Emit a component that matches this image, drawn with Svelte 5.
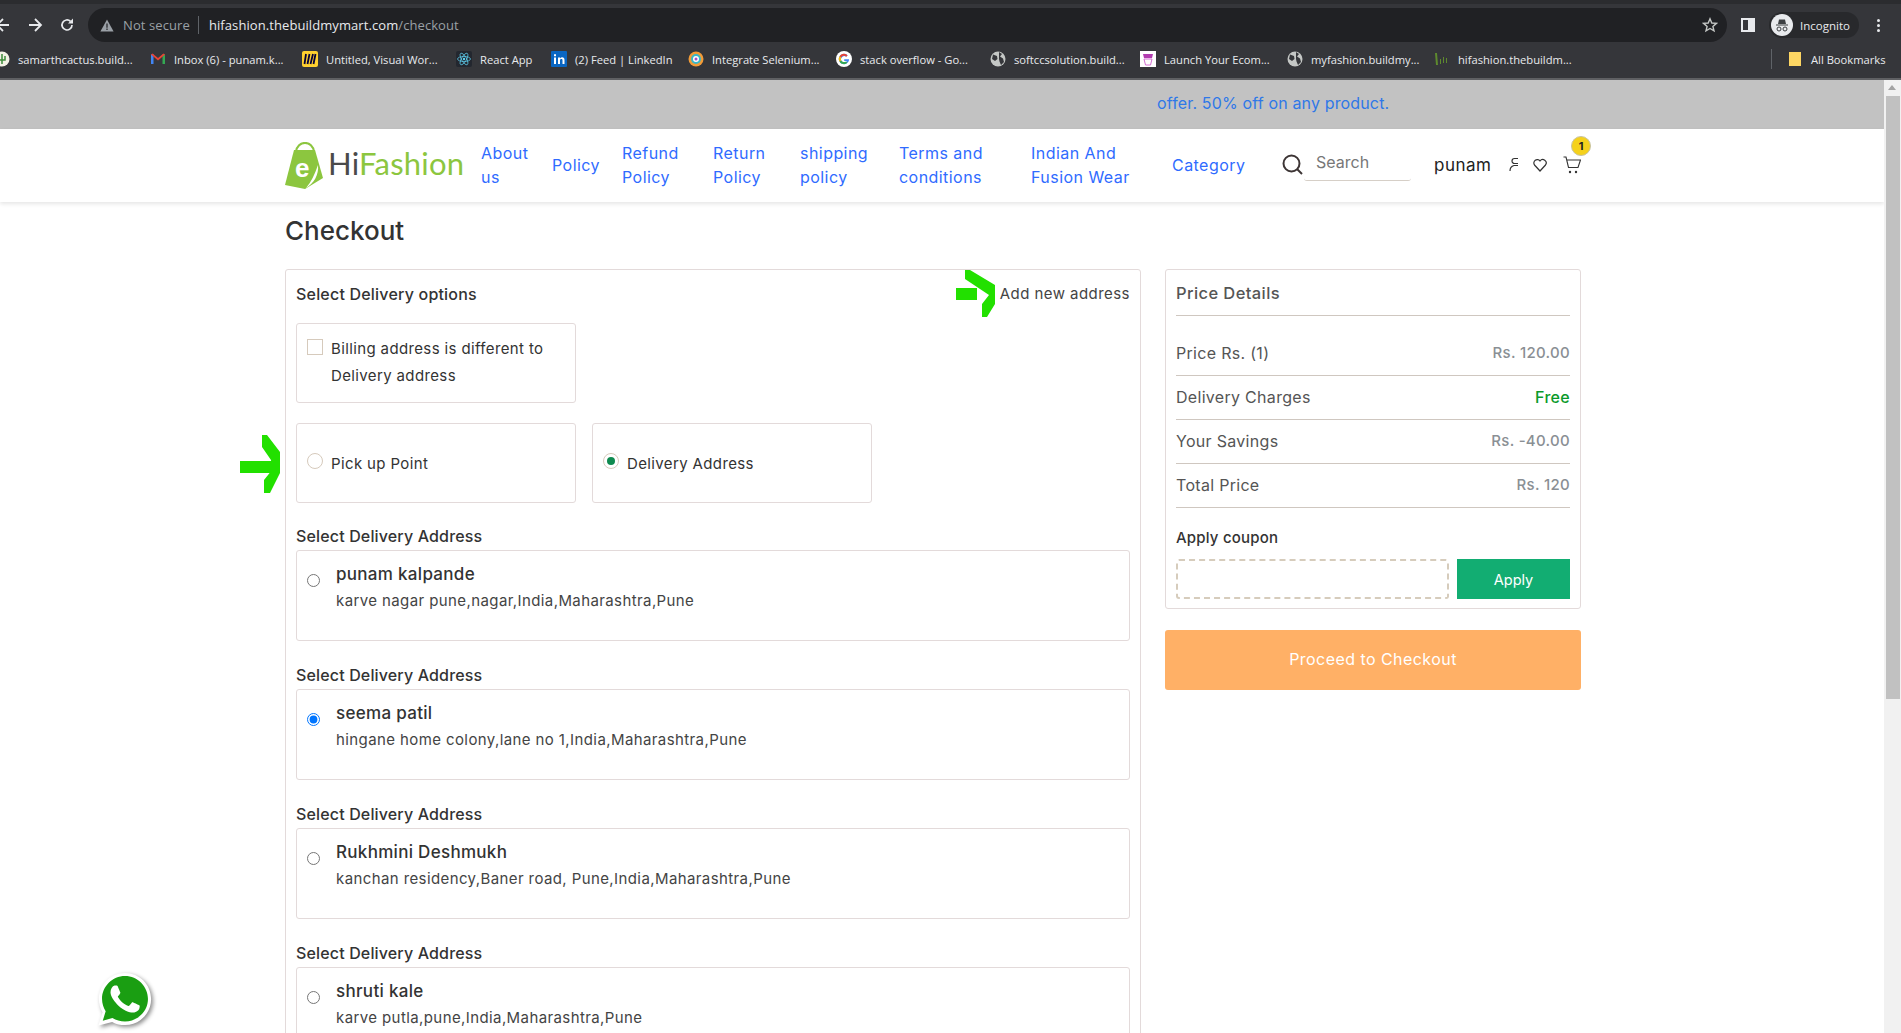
<script lang="ts">
    const bookmarks = [
        { icon: "cactus", label: "samarthcactus.build..." },
        { icon: "gmail", label: "Inbox (6) - punam.k..." },
        { icon: "miro", label: "Untitled, Visual Wor..." },
        { icon: "react", label: "React App" },
        { icon: "linkedin", label: "(2) Feed | LinkedIn" },
        { icon: "selenium", label: "Integrate Selenium..." },
        { icon: "google", label: "stack overflow - Go..." },
        { icon: "globe", label: "softccsolution.build..." },
        { icon: "launch", label: "Launch Your Ecom..." },
        { icon: "globe", label: "myfashion.buildmy..." },
        { icon: "hifashion", label: "hifashion.thebuildm..." },
    ];

    const navLinks = [
        "About us",
        "Policy",
        "Refund Policy",
        "Return Policy",
        "shipping policy",
        "Terms and conditions",
        "Indian And Fusion Wear",
        "Category",
    ];

    const addresses = [
        { name: "punam kalpande", line: "karve nagar pune,nagar,India,Maharashtra,Pune", checked: false },
        { name: "seema patil", line: "hingane home colony,lane no 1,India,Maharashtra,Pune", checked: true },
        { name: "Rukhmini Deshmukh", line: "kanchan residency,Baner road, Pune,India,Maharashtra,Pune", checked: false },
        { name: "shruti kale", line: "karve putla,pune,India,Maharashtra,Pune", checked: false },
    ];

    const prices = [
        { label: "Price Rs. (1)", value: "Rs. 120.00", free: false },
        { label: "Delivery Charges", value: "Free", free: true },
        { label: "Your Savings", value: "Rs. -40.00", free: false },
        { label: "Total Price", value: "Rs. 120", free: false },
    ];
</script>

<div class="window">
    <!-- Browser chrome -->
    <div class="toolbar">
        <div class="nav-buttons">
            <svg class="back" width="16" height="16" viewBox="0 0 16 16"><path d="M14 8H2M8 2 2 8l6 6" fill="none" stroke="#e8eaed" stroke-width="1.8" /></svg>
            <svg width="16" height="16" viewBox="0 0 16 16"><path d="M2 8h12M8 2l6 6-6 6" fill="none" stroke="#e8eaed" stroke-width="1.8" /></svg>
            <svg width="16" height="16" viewBox="0 0 16 16"><path d="M13 8a5 5 0 1 1-1.5-3.6" fill="none" stroke="#e8eaed" stroke-width="1.7" /><path d="M14 1.6V6.6H9z" fill="#e8eaed" /></svg>
        </div>
        <div class="omnibox">
            <svg width="14" height="13" viewBox="0 0 14 13"><path d="M7 0.5 13.6 12.5H0.4z" fill="#9aa0a6" /><path d="M6.4 4.5h1.2v4.2H6.4zM6.4 9.6h1.2v1.3H6.4z" fill="#202124" /></svg>
            <span class="not-secure">Not secure</span>
            <span class="omni-sep"></span>
            <span class="url">hifashion.thebuildmymart.com<span class="url-path">/checkout</span></span>
            <svg class="star" width="16" height="16" viewBox="0 0 16 16"><path d="M8 1.8 9.8 6l4.6.4-3.5 3 1.1 4.5L8 11.5l-4 2.4 1.1-4.5-3.5-3L6.2 6z" fill="none" stroke="#c4c7c5" stroke-width="1.4" /></svg>
        </div>
        <svg class="panel" width="14" height="14" viewBox="0 0 14 14"><rect x="1" y="1" width="12" height="12" fill="none" stroke="#e8eaed" stroke-width="2" /><rect x="7" y="1" width="6" height="12" fill="#e8eaed" /></svg>
        <div class="incognito">
            <svg width="22" height="22" viewBox="0 0 22 22"><circle cx="11" cy="11" r="11" fill="#e8eaed" /><path d="M5 10.5h12v1H5zM7 10l1-4.500h6l1 4.500z" fill="#3c4043" /><circle cx="8" cy="15" r="2" fill="none" stroke="#3c4043" /><circle cx="14" cy="15" r="2" fill="none" stroke="#3c4043" /></svg>
            <span>Incognito</span>
        </div>
        <div class="menu-dots"><i></i><i></i><i></i></div>
    </div>

    <div class="bookmarks">
        <div class="bookmark-list">
            {#each bookmarks as b}
                <div class="bookmark">
                    <svg width="16" height="16" viewBox="0 0 16 16">
                        {#if b.icon === "cactus"}
                            <circle cx="8" cy="8" r="7.500" fill="#f4f1e6" /><path d="M8 3v10M5 6v3h6V5" fill="none" stroke="#3d8a3a" stroke-width="1.500" />
                        {:else if b.icon === "gmail"}
                            <path d="M1 3.500 3.500 3v10H1z" fill="#4285f4" /><path d="M15 3.500 12.500 3v10H15z" fill="#34a853" /><path d="M1 3.500 2.500 2.500 8 7l5.500-4.500L15 3.500 8 9.500z" fill="#ea4335" />
                        {:else if b.icon === "miro"}
                            <rect width="16" height="16" rx="2" fill="#ffd02f" /><path d="M4 3 2.500 13M7.500 3 5.500 13M11 3 8.500 13M13.500 3 11.500 13" stroke="#050038" stroke-width="1.800" />
                        {:else if b.icon === "react"}
                            <rect width="16" height="16" rx="2" fill="#23272f" /><g fill="none" stroke="#5fd3f3" stroke-width=".7"><ellipse cx="8" cy="8" rx="6.500" ry="2.500" /><ellipse cx="8" cy="8" rx="6.500" ry="2.500" transform="rotate(60 8 8)" /><ellipse cx="8" cy="8" rx="6.500" ry="2.500" transform="rotate(120 8 8)" /></g><circle cx="8" cy="8" r="1.200" fill="#5fd3f3" />
                        {:else if b.icon === "linkedin"}
                            <rect width="16" height="16" rx="1" fill="#0a66c2" /><path d="M3 6.500h2V13H3zM3 3.200h2v2H3zM7 6.500h2v1c.5-.8 1.300-1.200 2.200-1.200 1.500 0 2.300 1 2.300 2.700v4h-2V9.500c0-.9-.4-1.400-1.100-1.400S9 8.600 9 9.500V13H7z" fill="#fff" />
                        {:else if b.icon === "selenium"}
                            <circle cx="8" cy="8" r="7.500" fill="#f29b38" /><circle cx="8" cy="8" r="5" fill="#38b6c9" /><circle cx="8" cy="8" r="3" fill="#fff" /><circle cx="8" cy="8" r="1.500" fill="#a64dc4" />
                        {:else if b.icon === "google"}
                            <circle cx="8" cy="8" r="8" fill="#fff" /><path d="M13 8.200H8.200v1.900H11A3.200 3.200 0 1 1 10.200 5.700l1.400-1.400A5.200 5.200 0 1 0 13.100 9z" fill="#4285f4" /><path d="M3.500 5.300 5.200 6.500a3.200 3.200 0 0 1 5-.8l1.400-1.400a5.200 5.200 0 0 0-8.100 1z" fill="#ea4335" /><path d="M3.500 10.700 5.200 9.500a3 3 0 0 1 0-3L3.500 5.300a5.200 5.200 0 0 0 0 5.400z" fill="#fbbc05" /><path d="M3.500 10.700a5.200 5.200 0 0 0 8 1L10 10.400a3.200 3.200 0 0 1-4.800-.9z" fill="#34a853" />
                        {:else if b.icon === "globe"}
                            <circle cx="8" cy="8" r="7.500" fill="#c4c7c5" /><path d="M3 3.500 7 5l.5 3L5 10 2 8zM9 1l3 2-2 2.500 3 2L14 11l-3 3-1.500-3.500L9 8z" fill="#35363a" />
                        {:else if b.icon === "launch"}
                            <rect width="16" height="16" fill="#fff" /><path d="M3 3h10l-1 4H4z" fill="#b23cb0" /><path d="M4 8h8l-1.500 6h-5z" fill="none" stroke="#d46ed2" />
                        {:else if b.icon === "hifashion"}
                            <path d="M1 2h2l1 12H2zM6 8h1v5H6zM9 6h1v6H9zM12 7h1v5h-1z" fill="#5e8a2e" />
                        {/if}
                    </svg>
                    <span>{b.label}</span>
                </div>
            {/each}
        </div>
        <span class="bookmark-sep"></span>
        <div class="all-bookmarks">
            <svg width="12" height="16" viewBox="0 0 12 16"><path d="M0 1h8l4 0v14H0z" fill="#fdd663" /></svg>
            <span>All Bookmarks</span>
        </div>
    </div>

    <!-- Page -->
    <div class="viewport">
        <div class="page">
            <div class="offer"><span>offer. 50% off on any product.</span></div>

            <header class="site-header">
                <div class="logo">
                    <svg width="38" height="47" viewBox="0 0 38 47">
                        <path d="M11 10C12 -2 28 -2 29 10" fill="none" stroke="#8cc63f" stroke-width="2.200" />
                        <path d="M9 8h21l8 28-18 11L0 43z" fill="#8cc63f" />
                        <path d="M33 23c1 10-4 18-12 23 5-6 9-14 12-23z" fill="#fff" />
                        <text x="10" y="35" class="logo-e">e</text>
                    </svg>
                    <span class="logo-word"><span class="logo-hi">Hi</span>Fashion</span>
                </div>
                <nav class="nav">
                    {#each navLinks as link}
                        <a href="#top">{link}</a>
                    {/each}
                </nav>
                <div class="search">
                    <svg width="21" height="21" viewBox="0 0 21 21"><circle cx="9.500" cy="9.500" r="8" fill="none" stroke="#3d3535" stroke-width="2" /><path d="m15 15 5 5" stroke="#3d3535" stroke-width="2" /></svg>
                    <span class="search-field">Search</span>
                </div>
                <span class="username">punam</span>
                <div class="user-icons">
                    <svg class="user" width="9" height="15" viewBox="0 0 9 15"><path d="M9 1.500H5.500a2.500 2.500 0 0 0 0 5H9M1 14c0-3 2-5 4-5.500h4" fill="none" stroke="#333" stroke-width="1.200" /></svg>
                    <svg class="heart" width="14" height="14" viewBox="0 0 14 14"><path d="M7 13 1.500 7A3.400 3.400 0 0 1 7 3a3.400 3.400 0 0 1 5.500 4z" fill="none" stroke="#333" stroke-width="1.200" /></svg>
                    <div class="cart">
                        <svg width="18" height="18" viewBox="0 0 18 18"><path d="M0.500 1H3l2.500 10.500h9.500L17.500 4H4" fill="none" stroke="#333" stroke-width="1.100" /><circle cx="7" cy="16" r="1.200" fill="#333" /><circle cx="13" cy="16" r="1.200" fill="#333" /></svg>
                        <span class="badge">1</span>
                    </div>
                </div>
            </header>

            <main class="container">
                <h1>Checkout</h1>
                <div class="columns">
                    <section class="card delivery">
                        <div class="delivery-head">
                            <h2>Select Delivery options</h2>
                            <a href="#top" class="add-address">Add new address</a>
                        </div>

                        <div class="option-row first">
                            <div class="option billing">
                                <span class="checkbox"></span>
                                <span>Billing address is different to Delivery address</span>
                            </div>
                        </div>

                        <div class="option-row">
                            <div class="option">
                                <span class="radio"></span>
                                <span>Pick up Point</span>
                            </div>
                            <div class="option">
                                <span class="radio on"></span>
                                <span>Delivery Address</span>
                            </div>
                        </div>

                        {#each addresses as a}
                            <h3 class="address-title">Select Delivery Address</h3>
                            <label class="address">
                                <input type="radio" name="address" checked={a.checked} />
                                <span class="address-text">
                                    <span class="address-name">{a.name}</span>
                                    <span class="address-line">{a.line}</span>
                                </span>
                            </label>
                        {/each}
                    </section>

                    <aside class="summary">
                        <section class="card price">
                            <h2 class="price-title">Price Details</h2>
                            <div class="price-rows">
                                {#each prices as p}
                                    <div class="price-row">
                                        <span>{p.label}</span>
                                        <span class="price-value" class:free={p.free}>{p.value}</span>
                                    </div>
                                {/each}
                            </div>
                            <div class="coupon-title">Apply coupon</div>
                            <div class="coupon">
                                <input type="text" class="coupon-input" />
                                <button class="apply">Apply</button>
                            </div>
                        </section>
                        <button class="proceed">Proceed to Checkout</button>
                    </aside>
                </div>
            </main>
        </div>

        <div class="scrollbar">
            <div class="scroll-up"></div>
            <div class="scroll-thumb"></div>
        </div>

        <!-- Annotation arrows drawn on top of the screenshot -->
        <svg class="arrow arrow-a" width="41" height="60" viewBox="0 0 41 60">
            <path d="M22 0h5l13 17v21L30 58h-6V45l8-10-1-10-9-13z" fill="#22e000" />
            <rect x="0" y="26" width="38" height="12" fill="#22e000" />
        </svg>
        <svg class="arrow arrow-b" width="39" height="49" viewBox="0 0 39 49">
            <path d="M9 1h5l25 15v19l-8 13h-5V35l7-9-24-16z" fill="#22e000" />
            <rect x="0" y="19" width="21" height="12" fill="#22e000" />
        </svg>

        <svg class="whatsapp" width="58" height="58" viewBox="0 0 24 24">
            <path d="M12 1.200C6 1.200 1.200 6 1.200 12c0 2 .5 3.900 1.500 5.500L1 23l5.700-1.500c1.600.9 3.400 1.300 5.300 1.300 6 0 10.800-4.800 10.800-10.800S18 1.200 12 1.200z" fill="#fff" />
            <path d="M12 2.500C6.800 2.500 2.500 6.800 2.500 12c0 1.900.6 3.600 1.500 5.100L2.800 21l4-1.100c1.500.9 3.300 1.400 5.200 1.400 5.200 0 9.500-4.200 9.500-9.300S17.200 2.500 12 2.500z" fill="#1a9e12" />
            <path d="M17.472 14.382c-.297-.149-1.758-.867-2.03-.967-.273-.099-.471-.148-.67.15-.197.297-.767.966-.94 1.164-.173.199-.347.223-.644.075-.297-.15-1.255-.463-2.39-1.475-.883-.788-1.48-1.761-1.653-2.059-.173-.297-.018-.458.13-.606.134-.133.298-.347.446-.52.149-.174.198-.298.298-.497.099-.198.05-.371-.025-.52-.075-.149-.669-1.612-.916-2.207-.242-.579-.487-.5-.669-.51-.173-.008-.371-.01-.57-.01-.198 0-.52.074-.792.372-.272.297-1.04 1.016-1.04 2.479 0 1.462 1.065 2.875 1.213 3.074.149.198 2.096 3.2 5.077 4.487.709.306 1.262.489 1.694.625.712.227 1.36.195 1.871.118.571-.085 1.758-.719 2.006-1.413.248-.694.248-1.289.173-1.413-.074-.124-.272-.198-.57-.347z" fill="#fff" />
        </svg>
    </div>
</div>

<style>
    :global(body) {
        margin: 0;
        overflow: hidden;
    }

    .window {
        height: 1033px;
        display: flex;
        flex-direction: column;
        font-family: Inter, "Noto Sans", sans-serif;
        color: #333;
        overflow: hidden;
    }

    /* Browser chrome */
    .toolbar {
        height: 42px;
        padding-top: 8px;
        box-sizing: border-box;
        display: flex;
        align-items: center;
        background: #35363a;
        box-shadow: inset 0 4px 0 #2b2c2f;
    }

    .nav-buttons {
        width: 88px;
        flex: none;
        display: flex;
        align-items: center;
        gap: 16px;
    }

    .back {
        margin-left: -5px;
    }

    .omnibox {
        width: 1639px;
        height: 34px;
        flex: none;
        box-sizing: border-box;
        padding: 0 9px 0 12px;
        border-radius: 17px;
        background: #202124;
        display: flex;
        align-items: center;
        font-family: "Open Sans", sans-serif;
        font-size: 13px;
    }

    .not-secure {
        margin-left: 9px;
        color: #9aa0a6;
        letter-spacing: 0.1px;
    }

    .omni-sep {
        width: 1px;
        height: 18px;
        background: #5f6368;
        margin: 0 10px 0 8px;
    }

    .url {
        color: #e8eaed;
        letter-spacing: 0.08px;
    }

    .url-path {
        color: #9aa0a6;
    }

    .star {
        margin-left: auto;
    }

    .panel {
        margin-left: 14px;
        flex: none;
    }

    .incognito {
        margin-left: 14px;
        width: 90px;
        height: 26px;
        box-sizing: border-box;
        padding: 0 8px 0 2px;
        border-radius: 13px;
        background: #28292c;
        display: flex;
        align-items: center;
        gap: 7px;
        color: #e8eaed;
        font-family: "Open Sans", sans-serif;
        font-size: 11.500px;
        flex: none;
    }

    .menu-dots {
        margin-left: 18px;
        display: flex;
        flex-direction: column;
        gap: 2px;
    }

    .menu-dots i {
        width: 3px;
        height: 3px;
        border-radius: 50%;
        background: #e8eaed;
    }

    .bookmarks {
        height: 34px;
        padding-bottom: 2px;
        flex: none;
        background: #35363a;
        display: flex;
        align-items: center;
        color: #e8eaed;
        font-family: "Open Sans", sans-serif;
        font-size: 11.200px;
        border-bottom: 2px solid #5f6063;
        box-sizing: content-box;
    }

    .bookmark-list {
        width: 1777px;
        margin-left: -6px;
        flex: none;
        display: grid;
        grid-template-columns: 156px 152px 154px 95px 137px 148px 154px 150px 147px 147px 1fr;
        overflow: hidden;
    }

    .bookmark {
        display: flex;
        align-items: center;
        gap: 8px;
        white-space: nowrap;
    }

    .bookmark svg {
        flex: none;
    }

    .bookmark-sep {
        width: 1px;
        height: 20px;
        background: #5f6368;
    }

    .all-bookmarks {
        margin-left: 17px;
        display: flex;
        align-items: center;
        gap: 10px;
        white-space: nowrap;
    }

    /* Page */
    .viewport {
        flex: 1;
        min-height: 0;
        display: flex;
        position: relative;
        background: #fff;
    }

    .page {
        flex: 1;
        min-width: 0;
        overflow: hidden;
    }

    .scrollbar {
        width: 17px;
        flex: none;
        background: #f1f1f1;
    }

    .scroll-up {
        height: 16px;
        position: relative;
    }

    .scroll-up::after {
        content: "";
        position: absolute;
        left: 4px;
        top: 5px;
        border: 4px solid transparent;
        border-top: 0;
        border-bottom: 5px solid #a3a3a3;
    }

    .scroll-thumb {
        width: 14px;
        height: 603px;
        margin-left: 2px;
        background: #c1c1c1;
    }

    .offer {
        height: 49px;
        box-sizing: border-box;
        padding: 0 0 4px 1157px;
        background: #c2c2c2;
        display: flex;
        align-items: center;
        color: #2f78e8;
        font-size: 16px;
        letter-spacing: 0.15px;
    }

    .site-header {
        height: 73px;
        box-sizing: border-box;
        padding: 0 0 2px 285px;
        display: flex;
        align-items: center;
        box-shadow: 0 2px 4px rgba(0, 0, 0, 0.1);
        position: relative;
    }

    .logo {
        width: 196px;
        flex: none;
        display: flex;
        align-items: center;
        gap: 5px;
        margin-top: 2px;
    }

    .logo-e {
        font-family: "Liberation Sans", sans-serif;
        font-weight: 700;
        font-size: 26px;
        fill: #fff;
    }

    .logo-word {
        font-family: Lato, sans-serif;
        font-size: 31px;
        color: #8cc63f;
        letter-spacing: 0.2px;
        margin-top: -6px;
    }

    .logo-hi {
        color: #4a4a4a;
    }

    .nav {
        width: 801px;
        flex: none;
        display: grid;
        grid-template-columns: 71px 70px 91px 87px 99px 132px 141px 110px;
        align-items: center;
    }

    .nav a {
        max-width: 92px;
        color: #2f6bff;
        text-decoration: none;
        font-size: 16px;
        letter-spacing: 0.45px;
        line-height: 24px;
    }

    .nav a:first-child {
        max-width: 55px;
    }

    .nav a:nth-child(6),
    .nav a:nth-child(7) {
        max-width: 104px;
    }

    .search {
        width: 152px;
        flex: none;
        display: flex;
        align-items: center;
    }

    .search-field {
        width: 95px;
        height: 28px;
        margin-left: 1px;
        padding: 4px 0 0 12px;
        margin-top: -1px;
        border-bottom: 1px solid #d6cfc7;
        border-radius: 0 0 3px 3px;
        color: #777;
        font-size: 16px;
    }

    .username {
        width: 75px;
        flex: none;
        font-size: 17px;
        letter-spacing: 0.5px;
        color: #222;
    }

    .user-icons {
        display: flex;
        align-items: center;
    }

    .heart {
        margin-left: 15px;
    }

    .cart {
        margin-left: 16px;
        position: relative;
        height: 18px;
    }

    .badge {
        position: absolute;
        left: 8px;
        top: -20px;
        width: 18px;
        height: 18px;
        border-radius: 50%;
        border: 1px solid #c9c4a0;
        background: #f5d11c;
        color: #222;
        font-size: 11px;
        font-weight: 700;
        display: flex;
        align-items: center;
        justify-content: center;
    }

    .container {
        margin-left: 285px;
        width: 1296px;
    }

    h1 {
        margin: 0;
        padding-top: 13px;
        height: 54px;
        box-sizing: content-box;
        font-size: 26px;
        line-height: 32px;
        font-weight: 500;
        color: #333;
    }

    .columns {
        display: flex;
        align-items: flex-start;
        gap: 24px;
    }

    .card {
        box-sizing: border-box;
        border: 1px solid #e3dada;
        border-radius: 3px;
        background: #fff;
    }

    .delivery {
        width: 856px;
        flex: none;
        padding: 0 10px;
    }

    .delivery-head {
        height: 47px;
        padding-bottom: 6px;
        display: flex;
        align-items: center;
        justify-content: space-between;
    }

    h2 {
        margin: 0;
        font-size: 16px;
        letter-spacing: 0.2px;
        font-weight: 500;
        color: #333;
    }

    .add-address {
        color: #444;
        font-size: 15px;
        letter-spacing: 0.45px;
        text-decoration: none;
    }

    .option-row {
        display: flex;
        gap: 16px;
        margin-bottom: 20px;
    }

    .option {
        width: 280px;
        height: 80px;
        box-sizing: border-box;
        padding: 0 10px;
        border: 1px solid #e3dada;
        border-radius: 3px;
        display: flex;
        align-items: center;
        gap: 8px;
        font-size: 15px;
        letter-spacing: 0.37px;
        color: #333;
        line-height: 27px;
    }

    .billing {
        align-items: flex-start;
        padding-top: 11px;
    }

    .checkbox {
        width: 16px;
        height: 16px;
        margin-top: 4px;
        box-sizing: border-box;
        flex: none;
        border: 1px solid #d6cabc;
    }

    .radio {
        width: 16px;
        height: 16px;
        box-sizing: border-box;
        flex: none;
        border: 1px solid #d6cabc;
        border-radius: 50%;
        position: relative;
        top: -2px;
    }

    .radio.on::after {
        content: "";
        position: absolute;
        left: 3px;
        top: 3px;
        width: 8px;
        height: 8px;
        border-radius: 50%;
        background: #0f8a4f;
    }

    .address-title {
        margin: 0 0 4px;
        padding-top: 25px;
        font-size: 16px;
        letter-spacing: 0.15px;
        line-height: 19px;
        font-weight: 500;
        color: #333;
    }

    .option-row + .address-title {
        padding-top: 4px;
    }

    .address {
        height: 91px;
        box-sizing: border-box;
        border: 1px solid #e3dada;
        border-radius: 3px;
        padding: 11px 10px 0;
        display: flex;
        align-items: flex-start;
        gap: 16px;
    }

    .address input {
        width: 13px;
        height: 13px;
        margin: 12px 0 0;
        flex: none;
    }

    .address-text {
        display: flex;
        flex-direction: column;
        gap: 6px;
    }

    .address-name {
        font-size: 17px;
        letter-spacing: 0.3px;
        line-height: 24px;
        font-weight: 500;
        color: #333;
    }

    .address-line {
        font-size: 15px;
        letter-spacing: 0.4px;
        line-height: 18px;
        color: #444;
    }

    .summary {
        width: 416px;
        flex: none;
        display: flex;
        flex-direction: column;
        gap: 21px;
    }

    .price {
        height: 340px;
        padding: 0 10px;
    }

    .price-title {
        height: 45px;
        line-height: 46px;
        font-size: 16.500px;
        letter-spacing: 0.4px;
        border-bottom: 1px solid #cfc7c0;
        color: #555;
    }

    .price-rows {
        padding-top: 16px;
    }

    .price-row {
        height: 44px;
        box-sizing: border-box;
        padding-bottom: 2px;
        border-bottom: 1px solid #cfc7c0;
        display: flex;
        align-items: center;
        justify-content: space-between;
        font-size: 16px;
        letter-spacing: 0.3px;
        color: #555;
    }

    .price-value {
        color: #8a8f94;
        font-weight: 500;
        font-size: 15px;
    }

    .price-value.free {
        color: #0a9a2a;
        font-size: 16px;
    }

    .coupon-title {
        margin-top: 19px;
        font-size: 15px;
        letter-spacing: 0.2px;
        line-height: 22px;
        font-weight: 500;
        color: #333;
    }

    .coupon {
        margin-top: 10px;
        display: flex;
        justify-content: space-between;
    }

    .coupon-input {
        width: 273px;
        height: 40px;
        box-sizing: border-box;
        border: 2px dashed #d6ccbc;
        border-radius: 3px;
        background: #fff;
        outline: none;
    }

    .apply {
        width: 113px;
        height: 40px;
        border: 0;
        background: #12ad72;
        color: #fff;
        font-family: inherit;
        font-size: 14.500px;
    }

    .proceed {
        height: 60px;
        border: 0;
        border-radius: 3px;
        background: #ffb066;
        color: #fff;
        padding-bottom: 3px;
        font-family: inherit;
        font-size: 16px;
        letter-spacing: 0.45px;
    }

    /* Overlays */
    .arrow {
        position: absolute;
    }

    .arrow-a {
        left: 240px;
        top: 355px;
    }

    .arrow-b {
        left: 956px;
        top: 189px;
    }

    .whatsapp {
        position: absolute;
        left: 96px;
        top: 890px;
        filter: drop-shadow(2px 2px 2px rgba(0, 0, 0, 0.45));
    }
</style>
